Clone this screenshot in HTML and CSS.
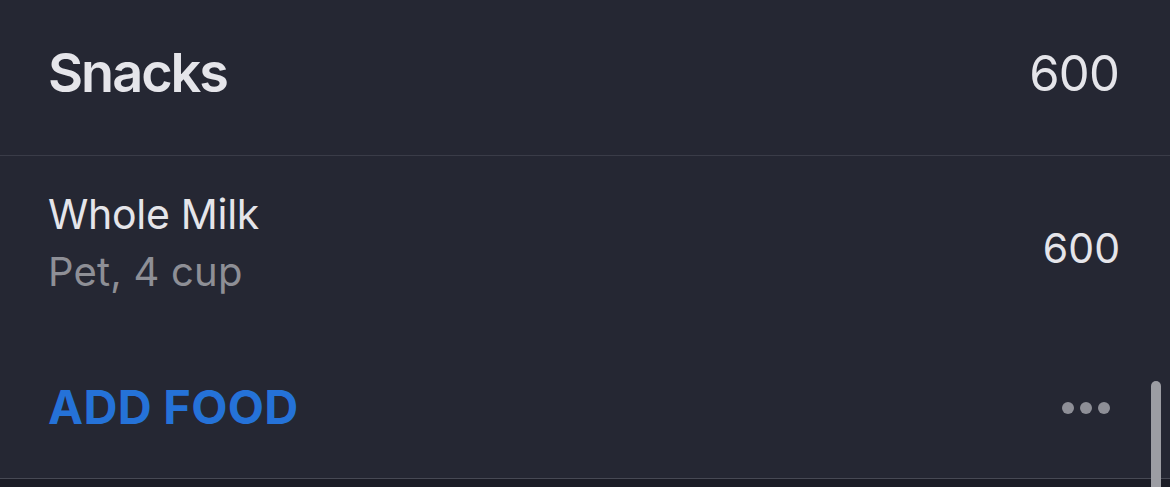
FILE: index.html
```html
<!DOCTYPE html>
<html lang="en">
<head>
<meta charset="utf-8">
<title>Snacks</title>
<link rel="stylesheet" href="styles.css">
</head>
<body>
<div class="screen">
  <section class="meal">
    <header class="meal-header">
      <h2 class="meal-title">Snacks</h2>
      <span class="meal-total">600</span>
    </header>
    <div class="food-row">
      <div class="food-info">
        <div class="food-name">Whole Milk</div>
        <div class="food-detail">Pet, 4 cup</div>
      </div>
      <span class="food-cal">600</span>
    </div>
    <div class="add-row">
      <span class="add-food">ADD FOOD</span>
      <span class="more" aria-label="More"><i></i><i></i><i></i></span>
    </div>
  </section>
  <div class="footer"></div>
  <div class="scrollbar"></div>
</div>
</body>
</html>
```

FILE: styles.css
```css
* { box-sizing: border-box; }
html, body {
  margin: 0;
  padding: 0;
  background: #1b1c26;
}
body {
  font-family: "Inter", "Liberation Sans", sans-serif;
  width: 1170px;
  height: 487px;
  overflow: hidden;
}
.screen {
  position: relative;
  height: 487px;
  overflow: hidden;
}
.meal {
  background: #252733;
}
.meal-header {
  display: flex;
  justify-content: space-between;
  align-items: flex-start;
  height: 156px;
  padding: 43px 51px 0 48px;
  border-bottom: 1px solid #3a3c48;
}
.meal-title {
  margin: 0;
  font-size: 54px;
  line-height: 60px;
  font-weight: 600;
  letter-spacing: -2px;
  color: #e5e5ea;
}
.meal-total {
  font-size: 49px;
  line-height: 60px;
  font-weight: 400;
  color: #e5e5ea;
  letter-spacing: -0.8px;
  margin-top: 1px;
}
.food-row {
  display: flex;
  justify-content: space-between;
  align-items: center;
  height: 174px;
  padding: 0 50px 0 48px;
}
.food-name {
  font-size: 41px;
  line-height: 58px;
  color: #e5e5ea;
  letter-spacing: -0.3px;
}
.food-detail {
  font-size: 40px;
  line-height: 58px;
  color: #8e8f96;
  letter-spacing: 0.2px;
}
.food-cal {
  font-size: 41px;
  line-height: 58px;
  color: #e5e5ea;
  margin-top: 9px;
}
.add-row {
  display: flex;
  justify-content: space-between;
  align-items: center;
  height: 149px;
  padding: 6px 60px 0 48px;
  border-bottom: 1px solid #474954;
}
.add-food {
  font-size: 47px;
  line-height: 60px;
  font-weight: 700;
  color: #2572d8;
  letter-spacing: 0.3px;
}
.more {
  display: flex;
  gap: 6px;
  margin-top: 2px;
}
.more i {
  width: 12px;
  height: 12px;
  border-radius: 50%;
  background: #8e8f97;
}
.footer {
  height: 8px;
  background: #1b1c26;
}
.scrollbar {
  position: absolute;
  left: 1151px;
  top: 381px;
  width: 10px;
  height: 140px;
  border-radius: 5px;
  background: #9c9da3;
}
```
